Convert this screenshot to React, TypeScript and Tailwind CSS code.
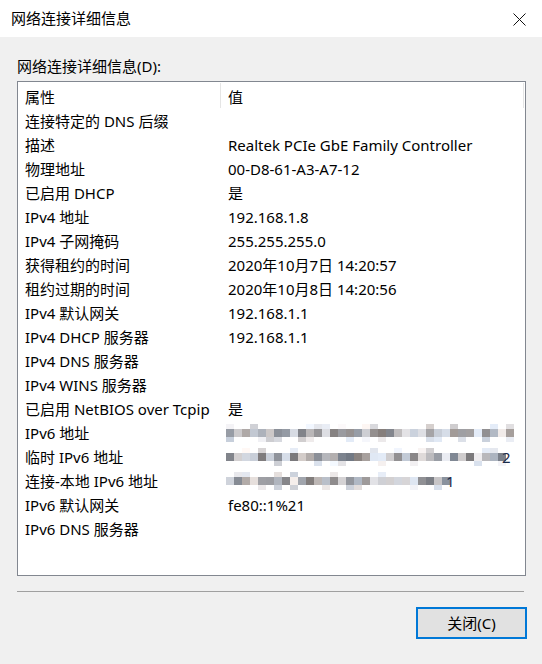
import React from 'react';

const rows: [string, string][] = [
    ['连接特定的 DNS 后缀', ''],
    ['描述', 'Realtek PCIe GbE Family Controller'],
    ['物理地址', '00-D8-61-A3-A7-12'],
    ['已启用 DHCP', '是'],
    ['IPv4 地址', '192.168.1.8'],
    ['IPv4 子网掩码', '255.255.255.0'],
    ['获得租约的时间', '2020年10月7日 14:20:57'],
    ['租约过期的时间', '2020年10月8日 14:20:56'],
    ['IPv4 默认网关', '192.168.1.1'],
    ['IPv4 DHCP 服务器', '192.168.1.1'],
    ['IPv4 DNS 服务器', ''],
    ['IPv4 WINS 服务器', ''],
    ['已启用 NetBIOS over Tcpip', '是'],
    ['IPv6 地址', '#blur:36:'],
    ['临时 IPv6 地址', '#blur:35:2'],
    ['连接-本地 IPv6 地址', '#blur:28:1'],
    ['IPv6 默认网关', 'fe80::1%21'],
    ['IPv6 DNS 服务器', ''],
];

// cheap deterministic noise for the pixelated (censored) addresses
function noise(seed: number) {
    const x = Math.sin(seed * 12.9898) * 43758.5453;
    return x - Math.floor(x);
}

function gray(seed: number, light: boolean) {
    const r = noise(seed);
    const base = light ? 205 + Math.floor(r * 45) : 120 + Math.floor(r * 120);
    const tint = Math.floor(noise(seed + 0.37) * 16) - 8;
    const c = (v: number) => Math.max(0, Math.min(255, v));
    return `rgb(${c(base + tint)},${c(base)},${c(base - tint + 4)})`;
}

function Blurred({ count, tail, seed }: { count: number; tail: string; seed: number }) {
    const cells = Array.from({ length: count }, (_, i) => i);
    return (
        <div className="flex items-center -ml-[2px]">
            <div className="flex flex-col -mt-[1px]">
                <div className="flex h-[5px]">
                    {cells.map(i => (
                        <div key={i} className="w-[8px]" style={{ background: noise(seed * 31 + i) > 0.7 ? gray(seed * 100 + i, true) : 'transparent' }} />
                    ))}
                </div>
                <div className="flex h-[8px]">
                    {cells.map(i => (
                        <div key={i} className="w-[8px]" style={{ background: gray(seed * 200 + i, false) }} />
                    ))}
                </div>
                <div className="flex h-[5px]">
                    {cells.map(i => (
                        <div key={i} className="w-[8px]" style={{ background: noise(seed * 57 + i) > 0.65 ? gray(seed * 300 + i, true) : 'transparent' }} />
                    ))}
                </div>
            </div>
            {tail && <span className="text-[#1a2a4a] -ml-[4px]">{tail}</span>}
        </div>
    );
}

export default function App() {
    return (
        <div className="w-[542px] h-[664px] bg-[#f0f0f0] flex flex-col text-black text-[15px] font-['Segoe_UI','Noto_Sans','Noto_Sans_CJK_SC',sans-serif]">
            <div className="h-[37px] bg-white flex items-center justify-between pl-[11px] pr-[16px]">
                <span className="leading-[20px] -mt-[1px]">网络连接详细信息</span>
                <svg width="13" height="13" viewBox="0 0 13 13" className="mt-[1px]">
                    <path d="M0.5 0.5 L12.5 12.5 M12.5 0.5 L0.5 12.5" stroke="#111" strokeWidth="1" fill="none" />
                </svg>
            </div>

            <div className="flex flex-col pl-[17px] pr-[16px] pt-[19px]">
                <div className="leading-[20px]">网络连接详细信息(D):</div>

                <div className="mt-[5px] h-[495px] bg-white border border-[#828790] flex flex-col">
                    <div className="h-[27px] flex shrink-0">
                        <div className="w-[203px] border-r border-[#e5e5e5] pl-[7px] pt-[2px] leading-[24px] my-[1px]">属性</div>
                        <div className="w-[303px] border-r border-[#e5e5e5] pl-[7px] pt-[2px] leading-[24px] my-[1px]">值</div>
                    </div>
                    {rows.map(([k, v], idx) => (
                        <div key={k} className="h-[24px] flex items-center shrink-0 whitespace-nowrap">
                            <div className="w-[203px] pl-[7px] overflow-hidden">{k}</div>
                            <div className="pl-[7px] flex-1">
                                {v.startsWith('#blur') ? (
                                    <Blurred count={Number(v.split(':')[1])} tail={v.split(':')[2]} seed={idx + 3} />
                                ) : (
                                    v
                                )}
                            </div>
                        </div>
                    ))}
                </div>

                <div className="mt-[15px] mr-[2px] h-[1px] bg-[#a0a0a0]" />

                <div className="flex justify-end mt-[15px] -mr-[1px]">
                    <button className="w-[111px] h-[32px] bg-[#e1e1e1] border-2 border-[#0078d7] leading-[20px]">
                        关闭(C)
                    </button>
                </div>
            </div>
        </div>
    );
}
